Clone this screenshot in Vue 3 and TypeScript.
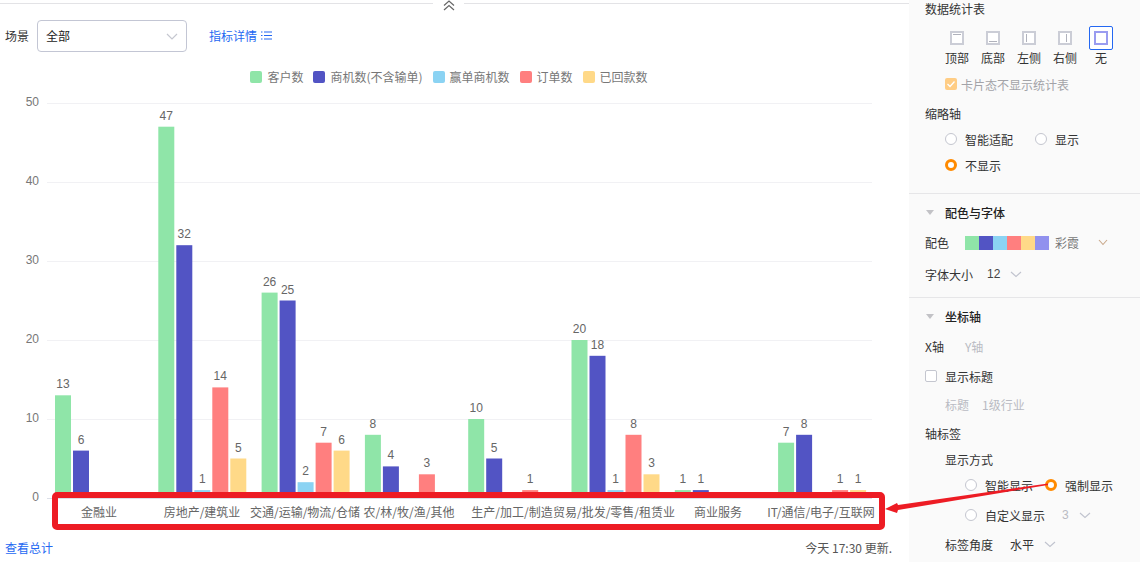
<script setup lang="ts">
const colors = ['#8fe5a8', '#5254c4', '#8bd3f3', '#ff7f7f', '#ffd988']
const seriesNames = ['客户数', '商机数(不含输单)', '赢单商机数', '订单数', '已回款数']
const palette = ['#8fe5a8', '#5254c4', '#8bd3f3', '#ff7f7f', '#ffd988', '#9191ee']
const categories: { name: string; values: (number | null)[] }[] = [
  { name: '金融业', values: [13, 6, null, null, null] },
  { name: '房地产/建筑业', values: [47, 32, 1, 14, 5] },
  { name: '交通/运输/物流/仓储', values: [26, 25, 2, 7, 6] },
  { name: '农/林/牧/渔/其他', values: [8, 4, null, 3, null] },
  { name: '生产/加工/制造', values: [10, 5, null, 1, null] },
  { name: '贸易/批发/零售/租赁业', values: [20, 18, 1, 8, 3] },
  { name: '商业服务', values: [1, 1, null, null, null] },
  { name: 'IT/通信/电子/互联网', values: [7, 8, null, 1, 1] },
]
const baseY = 498
const unit = 7.9
const ticks = [0, 10, 20, 30, 40, 50].map((v) => ({ v, y: Math.round(baseY - v * unit) }))
const groupX = (i: number) => 55 + i * 103.3
const bars = categories.flatMap((c, i) =>
  c.values.flatMap((v, s) =>
    v === null
      ? []
      : [{ key: `${i}-${s}`, x: groupX(i) + s * 18, y: baseY - v * unit, h: v * unit, fill: colors[s], v }],
  ),
)
const labelX = [99, 202, 305, 409, 512, 614, 718, 821]
const positions = ['顶部', '底部', '左侧', '右侧', '无']
</script>

<template>
  <div class="page">
    <main class="main">
      <div class="topline">
        <svg class="collapse" width="31" height="11" viewBox="0 0 31 11">
          <path d="M11 5.5 16 1 21 5.5M11 10 16 5.5 21 10" fill="none" stroke="#666" stroke-width="1.2" />
        </svg>
      </div>
      <div class="toolbar">
        <span class="tool-label">场景</span>
        <div class="select">
          <span>全部</span>
          <svg width="12" height="7" viewBox="0 0 12 7"><path d="M1 1 6 6 11 1" fill="none" stroke="#c5c7d0" stroke-width="1.2" /></svg>
        </div>
        <a class="link">指标详情</a>
        <svg class="list-icon" width="11" height="9" viewBox="0 0 11 9">
          <path d="M3 1h8M3 4.5h8M3 8h8" stroke="#2468f2" stroke-width="1" />
          <path d="M0 1h1.5M0 4.5h1.5M0 8h1.5" stroke="#2468f2" stroke-width="1" />
        </svg>
      </div>
      <div class="legend">
        <div v-for="(n, i) in seriesNames" :key="n" class="legend-item">
          <i class="legend-dot" :style="{ background: colors[i] }"></i>{{ n }}
        </div>
      </div>
      <svg class="chart" width="909" height="452" viewBox="0 86 909 452">
        <g v-for="t in ticks" :key="t.v">
          <line x1="47" x2="872" :y1="t.y + 0.5" :y2="t.y + 0.5" :stroke="t.v === 0 ? '#dcdfe8' : '#f1f1f4'" />
          <text x="39" :y="t.y + 3" text-anchor="end" class="axis-num">{{ t.v }}</text>
        </g>
        <g v-for="b in bars" :key="b.key">
          <rect :x="b.x" :y="b.y" width="16" :height="b.h" :fill="b.fill" />
          <text :x="b.x + 8" :y="b.y - 7" text-anchor="middle" class="bar-num">{{ b.v }}</text>
        </g>
        <text v-for="(c, i) in categories" :key="c.name" :x="labelX[i]" y="517" text-anchor="middle" class="cat">{{ c.name }}</text>
      </svg>
      <div class="footer">
        <a class="link">查看总计</a>
        <span class="updated">今天 17:30 更新.</span>
      </div>
    </main>

    <aside class="panel">
      <section class="sec sec-a">
        <div class="row title-row">数据统计表</div>
        <div class="tiles">
          <div v-for="(p, i) in positions" :key="p" class="tile">
            <div class="tile-icon" :class="{ on: i === 4 }">
              <svg v-if="i < 4" width="14" height="14" viewBox="0 0 14 14">
                <rect x="1" y="1" width="12" height="12" fill="#fff" stroke="#cbcdd6" stroke-width="2" />
                <path v-if="i === 0" d="M3 3.5h8" stroke="#b0b2bc" />
                <path v-if="i === 1" d="M3 10.5h8" stroke="#b0b2bc" />
                <path v-if="i === 2" d="M4.5 3v8" stroke="#b0b2bc" />
                <path v-if="i === 3" d="M8.5 3v8" stroke="#b0b2bc" />
              </svg>
              <svg v-else width="14" height="14" viewBox="0 0 14 14">
                <rect x="1" y="1" width="12" height="12" fill="#fff" stroke="#9a9cf0" stroke-width="2" />
              </svg>
            </div>
            <span>{{ p }}</span>
          </div>
        </div>
        <div class="row check-row muted">
          <i class="check checked">
            <svg width="12" height="12" viewBox="0 0 12 12"><path d="M2.5 6 5 8.5 9.5 3.5" fill="none" stroke="#fff" stroke-width="1.3" /></svg>
          </i>
          卡片态不显示统计表
        </div>
        <div class="row thumb-title">缩略轴</div>
        <div class="row radio-row in20">
          <span class="radio-item w90"><i class="radio"></i>智能适配</span>
          <span class="radio-item"><i class="radio"></i>显示</span>
        </div>
        <div class="row radio-row in20">
          <span class="radio-item"><i class="radio on"></i>不显示</span>
        </div>
      </section>

      <section class="sec sec-b">
        <div class="row sec-title"><i class="tri"></i>配色与字体</div>
        <div class="row r-color">
          <span class="fixed40">配色</span>
          <span class="swatches">
            <i v-for="c in palette" :key="c" :style="{ background: c }"></i>
          </span>
          <span class="grey name">彩霞</span>
          <svg class="chev-orange" width="10" height="7" viewBox="0 0 10 7"><path d="M1 1 5 5.5 9 1" fill="none" stroke="#c9a88a" stroke-width="1.1" /></svg>
        </div>
        <div class="row r-size">
          <span>字体大小</span>
          <span class="size-val num">12</span>
          <svg class="chev" width="12" height="7" viewBox="0 0 12 7"><path d="M1 1 6 5.5 11 1" fill="none" stroke="#c0c3ce" stroke-width="1.1" /></svg>
        </div>
      </section>

      <section class="sec sec-c">
        <div class="row sec-title"><i class="tri"></i>坐标轴</div>
        <div class="row r-tabs">
          <span class="fixed40">X轴</span><span class="light">Y轴</span>
        </div>
        <div class="row r-show"><i class="check"></i>显示标题</div>
        <div class="row r-axis-title in20 light">
          <span class="t-name">标题</span><span>1级行业</span>
        </div>
        <div class="row r-ticks">轴标签</div>
        <div class="row r-mode in20">显示方式</div>
        <div class="row r-r1 in40">
          <span class="radio-item w80"><i class="radio"></i>智能显示</span>
          <span class="radio-item"><i class="radio on"></i>强制显示</span>
        </div>
        <div class="row r-r2 in40">
          <span class="radio-item w97"><i class="radio"></i>自定义显示</span>
          <span class="light three num">3</span>
          <svg class="chev tight" width="12" height="7" viewBox="0 0 12 7"><path d="M1 1 6 5.5 11 1" fill="none" stroke="#c0c3ce" stroke-width="1.1" /></svg>
        </div>
        <div class="row r-angle in20">
          <span class="w65">标签角度</span><span>水平</span>
          <svg class="chev" width="12" height="7" viewBox="0 0 12 7"><path d="M1 1 6 5.5 11 1" fill="none" stroke="#c0c3ce" stroke-width="1.1" /></svg>
        </div>
      </section>
    </aside>

    <svg class="annotation" width="1140" height="562" viewBox="0 0 1140 562">
      <rect x="55" y="495" width="827" height="32" rx="2" fill="none" stroke="#ed1c24" stroke-width="6" />
      <path d="M1048 483.5 898 505 897 503 885 509 897 513 898 510 1048 485Z" fill="#ed1c24" />
    </svg>
  </div>
</template>

<style>
html, body { margin: 0; background: #fff; }
</style>

<style scoped>
.page {
  position: relative;
  display: flex;
  width: 1140px;
  height: 562px;
  overflow: hidden;
  font: 12px "Noto Sans CJK SC", "Liberation Sans", sans-serif;
  color: #333;
}
.main { width: 909px; flex: none; }
.topline { position: relative; height: 3px; border-bottom: 1px solid #e3e3e6; }
.collapse { position: absolute; left: 433px; top: 0; background: #fff; }
.toolbar { display: flex; align-items: center; height: 32px; margin-top: 16px; padding-left: 5px; }
.tool-label { width: 32px; padding-bottom: 2px; }
.select {
  box-sizing: border-box;
  display: flex;
  align-items: center;
  justify-content: space-between;
  width: 150px;
  height: 32px;
  padding: 0 8px;
  border: 1px solid #c3c6d4;
  border-radius: 4px;
  color: #222;
}
.select span { padding-bottom: 2px; }
.link { color: #2468f2; }
.toolbar .link { margin-left: 22px; padding-bottom: 2px; }
.list-icon { margin-left: 4px; margin-bottom: 2px; }
.legend {
  display: flex;
  justify-content: center;
  gap: 10px;
  height: 18px;
  margin-top: 16px;
  padding-right: 11px;
  line-height: 18px;
  color: #777;
}
.legend-item { display: flex; align-items: center; }
.legend-dot { width: 12px; height: 12px; margin-right: 5px; border-radius: 2px; }
.chart { display: block; }
.cat { font: 12px "Noto Sans CJK SC", "Liberation Sans", sans-serif; fill: #666; }
.axis-num, .bar-num { font: 12px "Liberation Sans", "Noto Sans CJK SC", sans-serif; fill: #666; }
.axis-num { fill: #777; }
.num { font-family: "Liberation Sans", sans-serif; }
.footer {
  display: flex;
  justify-content: space-between;
  align-items: center;
  height: 16px;
  margin-top: 1px;
  padding: 0 17px 0 5px;
}
.updated { color: #555; }

.panel { flex: 1; background: #fafafa; }
.sec { border-bottom: 1px solid #e6e6e8; }
.sec-a { height: 193px; }
.sec-b { box-sizing: border-box; height: 104px; padding-top: 9px; }
.sec-c { padding-top: 9px; border-bottom: 0; }
.row { display: flex; align-items: center; padding-left: 16px; white-space: nowrap; }
.title-row { height: 16px; }
.tiles { display: flex; margin: 10px 0 0 30px; }
.tile { width: 36px; display: flex; flex-direction: column; align-items: center; }
.tile span { height: 18px; line-height: 16px; }
.tile-icon {
  box-sizing: border-box;
  display: flex;
  align-items: center;
  justify-content: center;
  width: 24px;
  height: 24px;
  border: 1px solid transparent;
  border-radius: 2px;
}
.tile-icon.on { border-color: #2468f2; background: #fff; }
.check-row { height: 18px; margin-top: 7px; padding-left: 36px; }
.muted { color: #a3a3a8; }
.check {
  box-sizing: border-box;
  display: inline-flex;
  width: 12px;
  height: 12px;
  margin-right: 4px;
  border: 1px solid #c4c6cf;
  border-radius: 2px;
  background: #fff;
}
.check.checked { border: 0; background: #ffcd85; }
.thumb-title { height: 18px; margin-top: 11px; }
.radio-row { height: 26px; }
.sec-a .thumb-title + .radio-row { margin-top: 4px; }
.in20 { padding-left: 36px; }
.in40 { padding-left: 56px; }
.radio-item { display: inline-flex; align-items: center; }
.radio {
  box-sizing: border-box;
  width: 12px;
  height: 12px;
  margin-right: 8px;
  border: 1px solid #c4c6cf;
  border-radius: 50%;
  background: #fff;
}
.radio.on { border: 3px solid #ff8a00; }
.w90 { width: 90px; }
.w80 { width: 80px; }
.w97 { width: 97px; }
.sec-title { height: 18px; font-weight: 500; color: #222; padding-left: 17px; }
.tri {
  width: 0;
  height: 0;
  margin-right: 11px;
  border: 4px solid transparent;
  border-top: 5px solid #c2c2c6;
  border-bottom: 0;
}
.r-color { height: 20px; margin-top: 11px; }
.fixed40 { width: 40px; }
.swatches { display: flex; width: 84px; margin-top: 2px; }
.swatches i { width: 14px; height: 14px; }
.grey { color: #777; }
.name { margin-left: 6px; }
.chev-orange { margin-left: 19px; }
.r-size { height: 20px; margin-top: 12px; }
.size-val { margin-left: 14px; color: #444; }
.chev { margin-left: 10px; }
.chev.tight { margin-left: 4px; }
.r-tabs { height: 20px; margin-top: 11px; }
.light { color: #b9bbc3; }
.r-show { height: 20px; margin-top: 10px; }
.r-show .check { margin-right: 8px; }
.r-axis-title { height: 20px; margin-top: 8px; }
.t-name { width: 37px; }
.r-ticks { height: 20px; margin-top: 9px; }
.r-mode { height: 20px; margin-top: 6px; }
.r-r1 { height: 20px; margin-top: 6px; }
.r-r2 { height: 20px; margin-top: 10px; }
.three { width: 13px; }
.r-angle { height: 20px; margin-top: 9px; }
.w65 { width: 65px; }
.annotation { position: absolute; left: 0; top: 0; pointer-events: none; }
</style>
